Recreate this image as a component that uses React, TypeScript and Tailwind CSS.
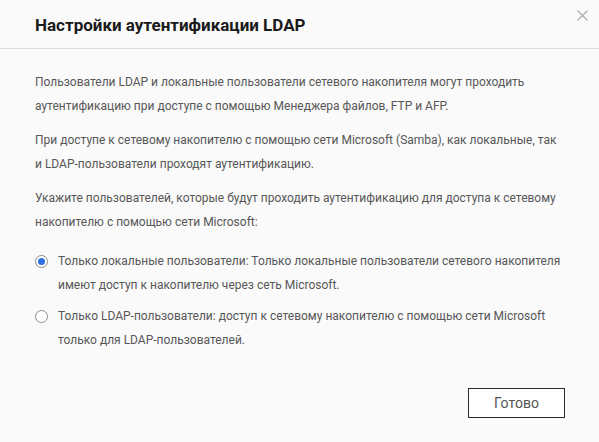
import React, { useState } from 'react';

const OPTIONS = [
  {
    id: 'local',
    lines: [
      'Только локальные пользователи: Только локальные пользователи сетевого накопителя',
      'имеют доступ к накопителю через сеть Microsoft.',
    ],
  },
  {
    id: 'ldap',
    lines: [
      'Только LDAP-пользователи: доступ к сетевому накопителю с помощью сети Microsoft',
      'только для LDAP-пользователей.',
    ],
  },
];

export default function App() {
  const [selected, setSelected] = useState('local');

  return (
    <div className="w-[599px] h-[442px] bg-[#fafafa] font-['Roboto',sans-serif] text-[#575757] relative overflow-hidden">
      {/* Header */}
      <div className="h-[49px] border-b border-[#dedede] pl-[35px] flex items-center">
        <h1 className="text-[17px] font-bold text-[#1a1a1a] pt-[4px]">Настройки аутентификации LDAP</h1>
      </div>
      <button className="absolute top-[8px] right-[10px] w-[14px] h-[14px] flex items-center justify-center">
        <svg width="11" height="11" viewBox="0 0 11 11" stroke="#a8a8a8" strokeWidth="1.1">
          <path d="M0.5 0.5 L10.5 10.5 M10.5 0.5 L0.5 10.5" />
        </svg>
      </button>

      {/* Body */}
      <div className="pl-[35px] pr-[10px] pt-[21px] text-[12px] leading-[24px] whitespace-nowrap">
        <p>
          Пользователи LDAP и локальные пользователи сетевого накопителя могут проходить
          <br />
          аутентификацию при доступе с помощью Менеджера файлов, FTP и AFP.
        </p>
        <p className="mt-[10px]">
          При доступе к сетевому накопителю с помощью сети Microsoft (Samba), как локальные, так
          <br />
          и LDAP-пользователи проходят аутентификацию.
        </p>
        <p className="mt-[10px]">
          Укажите пользователей, которые будут проходить аутентификацию для доступа к сетевому
          <br />
          накопителю с помощью сети Microsoft:
        </p>

        <div className="mt-[15px] flex flex-col gap-[7px]">
          {OPTIONS.map(opt => (
            <label key={opt.id} className="flex items-start cursor-pointer" onClick={() => setSelected(opt.id)}>
              <span className="w-[13px] h-[13px] mt-[6px] rounded-full border border-[#8a8a8a] bg-white flex items-center justify-center shrink-0">
                {selected === opt.id && <span className="w-[7px] h-[7px] rounded-full bg-[#2f6fe0]" />}
              </span>
              <span className="ml-[10px]">
                {opt.lines[0]}
                <br />
                {opt.lines[1]}
              </span>
            </label>
          ))}
        </div>
      </div>

      {/* Footer */}
      <div className="absolute right-[34px] bottom-[24px]">
        <button className="w-[97px] h-[30px] border border-[#2a2a2a] bg-white text-[14px] text-[#555]">
          Готово
        </button>
      </div>
    </div>
  );
}
